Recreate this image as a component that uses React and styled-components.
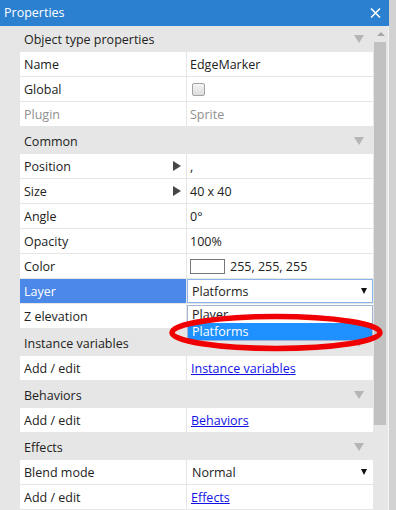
import React from "react";
import styled, { createGlobalStyle } from "styled-components";

const GlobalStyle = createGlobalStyle`
  *, *::before, *::after { box-sizing: border-box; }
  html, body { margin: 0; padding: 0; background: #d2d2d2; }
  body {
    font-family: "Open Sans", "Liberation Sans", sans-serif;
    font-size: 12.5px;
    color: #222;
  }
`;

const Window = styled.div`
  width: 396px;
  height: 510px;
  display: flex;
  overflow: hidden;
  background: #d2d2d2;
`;

const Panel = styled.div`
  width: 389px;
  display: flex;
  flex-direction: column;
  background: #e6e6e6;
`;

const TitleBar = styled.div`
  height: 26px;
  flex-shrink: 0;
  background: #2b80d0;
  color: #fff;
  display: flex;
  align-items: center;
  justify-content: space-between;
  padding: 0 8px 1px 4px;
`;

const Body = styled.div`
  flex: 1;
  display: flex;
  min-height: 0;
`;

const Sheet = styled.div`
  width: 373px;
  display: flex;
  flex-direction: column;
`;

const SectionHeader = styled.div`
  height: ${(p) => (p.$first ? 26 : 27)}px;
  padding: ${(p) => (p.$first ? 0 : 1)}px 9px 0 24px;
  display: flex;
  align-items: center;
  justify-content: space-between;
`;

const Row = styled.div`
  display: grid;
  grid-template-columns: 166px 186px;
  column-gap: 1px;
  margin-left: 20px;
  height: 24px;
  margin-bottom: 1px;
`;

const Label = styled.div`
  background: ${(p) => (p.$selected ? "#4b88e8" : "#fff")};
  color: ${(p) => (p.$selected ? "#fff" : p.$muted ? "#8f8f8f" : "#222")};
  display: flex;
  align-items: center;
  justify-content: space-between;
  padding: 0 5px 0 4px;
`;

const Value = styled.div`
  position: relative;
  background: #fff;
  color: ${(p) => (p.$muted ? "#8f8f8f" : "#222")};
  display: flex;
  align-items: center;
  gap: 5px;
  padding-left: 3px;
`;

const SelectBox = styled.div`
  position: relative;
  background: #fff;
  display: flex;
  align-items: center;
  justify-content: space-between;
  padding: 0 5px 0 4px;
  border: 1px solid ${(p) => (p.$bordered ? "#8ab4ea" : "transparent")};
`;

const DownArrow = styled.span`
  width: 0;
  height: 0;
  border-left: ${(p) => p.$w / 2}px solid transparent;
  border-right: ${(p) => p.$w / 2}px solid transparent;
  border-top: ${(p) => p.$h}px solid ${(p) => p.$color};
`;

const RightArrow = styled.span`
  width: 0;
  height: 0;
  border-top: 5px solid transparent;
  border-bottom: 5px solid transparent;
  border-left: 8px solid #474747;
`;

const Checkbox = styled.span`
  width: 13px;
  height: 13px;
  margin-left: 2px;
  border: 1px solid #a3a3a3;
  border-radius: 2px;
  background: linear-gradient(#f5f5f5, #dcdcdc);
`;

const Swatch = styled.span`
  width: 35px;
  height: 15px;
  border: 1px solid #777;
  background: #fff;
`;

const Link = styled.a`
  color: #1212e6;
  text-decoration: underline;
  padding-left: 1px;
  cursor: pointer;
`;

const DropList = styled.div`
  position: absolute;
  top: 25px;
  left: -1px;
  right: -1px;
  z-index: 2;
  background: #fff;
  border: 1px solid #9fb6d6;
`;

const Option = styled.div`
  height: 17px;
  display: flex;
  align-items: center;
  padding-left: 4px;
  background: ${(p) => (p.$active ? "#1e90ff" : "#fff")};
  color: ${(p) => (p.$active ? "#fff" : "#222")};
`;

const Circle = styled.svg`
  position: absolute;
  left: -21px;
  top: 5px;
  z-index: 3;
  pointer-events: none;
`;

const Scrollbar = styled.div`
  width: 16px;
  display: flex;
  flex-direction: column;
  align-items: center;
  background: #e6e6e6;
  border-right: 1px solid #f4f4f4;
`;

const ScrollButton = styled.div`
  height: 16px;
  width: 100%;
  display: flex;
  align-items: center;
  justify-content: center;
`;

const UpArrow = styled.span`
  width: 0;
  height: 0;
  border-left: 4px solid transparent;
  border-right: 4px solid transparent;
  border-bottom: 4px solid #a6a6a6;
`;

const Thumb = styled.div`
  width: 12px;
  height: 383px;
  margin-right: 1px;
  background: #c1c1c1;
`;

const CloseIcon = () => (
  <svg width="11" height="10" viewBox="0 0 11 10">
    <path d="M1 0.5 L10 9.5 M10 0.5 L1 9.5" stroke="#fff" strokeWidth="1.5" />
  </svg>
);

const Header = ({ title, first }) => (
  <SectionHeader $first={first}>
    <span>{title}</span>
    <DownArrow $w={11} $h={8} $color="#b5b5b5" />
  </SectionHeader>
);

const Prop = ({ label, children, muted, expand, selected }) => (
  <Row>
    <Label $muted={muted} $selected={selected}>
      <span>{label}</span>
      {expand && <RightArrow />}
    </Label>
    <Value $muted={muted}>{children}</Value>
  </Row>
);

const LayerSelect = () => (
  <Row>
    <Label $selected>
      <span>Layer</span>
    </Label>
    <SelectBox $bordered>
      <span>Platforms</span>
      <DownArrow $w={7} $h={6} $color="#111" />
      <DropList>
        <Option>Player</Option>
        <Option $active>Platforms</Option>
        <Circle width="220" height="44" viewBox="0 0 220 44">
          <ellipse cx="109" cy="21.5" rx="104" ry="16" fill="none" stroke="#f00000" strokeWidth="5.5" />
        </Circle>
      </DropList>
    </SelectBox>
  </Row>
);

const App = () => {
  return (
    <Window>
      <GlobalStyle />
      <Panel>
        <TitleBar>
          <span>Properties</span>
          <CloseIcon />
        </TitleBar>
        <Body>
          <Sheet>
            <Header title="Object type properties" first />
            <Prop label="Name">EdgeMarker</Prop>
            <Prop label="Global">
              <Checkbox />
            </Prop>
            <Prop label="Plugin" muted>
              Sprite
            </Prop>

            <Header title="Common" />
            <Prop label="Position" expand>
              ,
            </Prop>
            <Prop label="Size" expand>
              40 x 40
            </Prop>
            <Prop label="Angle">0°</Prop>
            <Prop label="Opacity">100%</Prop>
            <Prop label="Color">
              <Swatch />
              <span>255, 255, 255</span>
            </Prop>
            <LayerSelect />
            <Prop label="Z elevation" />

            <Header title="Instance variables" />
            <Prop label="Add / edit">
              <Link>Instance variables</Link>
            </Prop>

            <Header title="Behaviors" />
            <Prop label="Add / edit">
              <Link>Behaviors</Link>
            </Prop>

            <Header title="Effects" />
            <Row>
              <Label>
                <span>Blend mode</span>
              </Label>
              <SelectBox>
                <span>Normal</span>
                <DownArrow $w={7} $h={6} $color="#111" />
              </SelectBox>
            </Row>
            <Prop label="Add / edit">
              <Link>Effects</Link>
            </Prop>
          </Sheet>
          <Scrollbar>
            <ScrollButton>
              <UpArrow />
            </ScrollButton>
            <Thumb />
          </Scrollbar>
        </Body>
      </Panel>
    </Window>
  );
};

export default App;
